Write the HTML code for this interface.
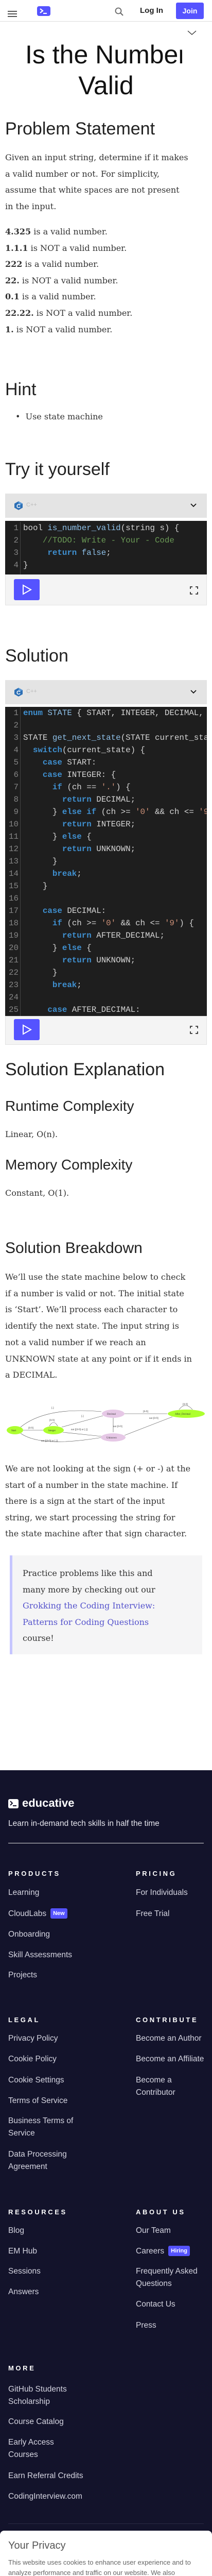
<!DOCTYPE html>
<html><head><meta charset="utf-8">
<style>
*{margin:0;padding:0;box-sizing:border-box}
html,body{width:412px;height:5156px;overflow:hidden;background:#fff}
body{font-family:"Liberation Sans",sans-serif;color:#222}
#w{position:relative;width:412px;height:5156px;overflow:hidden}
.a{position:absolute;white-space:nowrap}
.h{font-family:"Liberation Sans",sans-serif;font-size:34px;line-height:1;color:#222;left:10px}
.p{font-family:"DejaVu Serif",serif;font-size:16px;line-height:31.6px;color:#333;left:10px}
.code{position:absolute;left:10px;width:392px;background:#1e1e1e;overflow:hidden;font-family:"Liberation Mono",monospace;font-size:15.8px;line-height:24px;color:#d4d4d4}
.code .g{position:absolute;left:0;top:0;bottom:0;width:30px;border-right:1px solid #444;text-align:right;padding-right:3px;color:#858585;overflow:hidden}
.code .t{position:absolute;left:35px;top:0;white-space:pre}
.k{color:#3f8fcf;font-weight:bold}.f{color:#8ec0e8}.c{color:#6a9955}.s{color:#ce9178}
.ch{position:absolute;left:10px;width:392px;background:#e4e4e4}
.bar{position:absolute;left:10px;width:392px;background:#f4f4f4;border:1px solid #e2e2e2}
.run{position:absolute;left:27px;width:50px;height:41px;background:#5553ff;border-radius:3px}
.fh{position:absolute;font-size:13px;font-weight:bold;letter-spacing:3.6px;color:#fff;line-height:1}
.fl{position:absolute;font-size:15.5px;line-height:24px;color:#d4d4e0;white-space:nowrap}
.bd{display:inline-block;background:#5553ff;color:#fff;font-size:11px;font-weight:bold;padding:3px 5px;border-radius:3px;vertical-align:2px;margin-left:8px;line-height:14px}
</style></head><body><div id="w">

<div class="a" style="left:15px;top:21px;width:18px;height:2px;background:#555"></div>
<div class="a" style="left:15px;top:26px;width:18px;height:2px;background:#555"></div>
<div class="a" style="left:15px;top:31px;width:18px;height:2px;background:#555"></div>
<div class="a" style="left:72px;top:12px;width:26px;height:19px;background:#5553ff;border-radius:4px"></div>
<svg class="a" style="left:72px;top:12px" width="26" height="19"><path d="M6 5 L11 9 L6 13" stroke="#fff" stroke-width="2.2" fill="none"/><path d="M12 14 H19" stroke="#fff" stroke-width="2.2"/></svg>
<svg class="a" style="left:222px;top:13px" width="20" height="20"><circle cx="8" cy="8" r="5.5" stroke="#666" stroke-width="1.8" fill="none"/><path d="M12 12 L17 17" stroke="#666" stroke-width="2"/></svg>
<div class="a" style="left:272px;top:12px;font-size:15px;font-weight:bold;color:#222;line-height:18px">Log In</div>
<div class="a" style="left:342px;top:5px;width:54px;height:32px;background:#5553ff;border-radius:3px;color:#fff;font-size:14px;font-weight:bold;text-align:center;line-height:32px">Join</div>
<div class="a" style="left:0;top:41px;width:412px;height:1px;background:#ddd"></div>

<div class="a" style="left:0;top:76px;width:412px;text-align:center;font-size:50px;line-height:60px;color:#111">Is the Number<br>Valid</div>
<div class="a" style="left:354px;top:70px;width:58px;height:60px;background:#fff"></div>
<svg class="a" style="left:363px;top:58px" width="20" height="12"><path d="M2 2 L10 9 L18 2" stroke="#333" stroke-width="1.3" fill="none"/></svg>

<div class="a h" style="top:233px">Problem Statement</div>
<div class="a p" style="top:290px">Given an input string, determine if it makes<br>a valid number or not. For simplicity,<br>assume that white spaces are not present<br>in the input.</div>
<div class="a p" style="top:434px"><b>4.325</b> is a valid number.<br><b>1.1.1</b> is NOT a valid number.<br><b>222</b> is a valid number.<br><b>22.</b> is NOT a valid number.<br><b>0.1</b> is a valid number.<br><b>22.22.</b> is NOT a valid number.<br><b>1.</b> is NOT a valid number.</div>

<div class="a h" style="top:739px">Hint</div>
<div class="a p" style="top:793px;left:30px">•&nbsp;&nbsp;Use state machine</div>

<div class="a h" style="top:894px">Try it yourself</div>
<div class="ch" style="top:958px;height:47px"></div>
<svg class="a" style="left:27px;top:972px" width="18" height="19"><path d="M9 1 L17 5.5 L17 13.5 L9 18 L1 13.5 L1 5.5Z" fill="#2c6fb5"/><path d="M9 1 L17 5.5 L9 9.5Z" fill="#5b9ad8"/><text x="9" y="14" font-size="11" font-weight="bold" fill="#fff" text-anchor="middle" font-family="Liberation Sans">C</text></svg>
<div class="a" style="left:51px;top:974px;font-size:11px;color:#bbb">C++</div>
<svg class="a" style="left:369px;top:976px" width="14" height="10"><path d="M2 2 L7 7 L12 2" stroke="#111" stroke-width="1.8" fill="none"/></svg>
<div class="code" style="top:1011px;height:104px;padding-top:2px"><div class="g" style="top:2px">1<br>2<br>3<br>4</div><div class="t" style="top:2px">bool <span class="f">is_number_valid</span>(string s) {
    <span class="c">//TODO: Write - Your - Code</span>
     <span class="k">return</span> <span class="f">false</span>;
}</div></div>
<div class="bar" style="top:1115px;height:60px"></div>
<div class="run" style="top:1124px"><svg width="50" height="41"><path d="M18 12 L33 20.5 L18 29Z" stroke="#fff" stroke-width="2" fill="none"/></svg></div>
<svg class="a" style="left:369px;top:1138px" width="16" height="16"><path d="M1 5 V1 H5 M11 1 H15 V5 M15 11 V15 H11 M5 15 H1 V11" stroke="#333" stroke-width="1.8" fill="none"/></svg>

<div class="a h" style="top:1256px">Solution</div>
<div class="ch" style="top:1320px;height:47px"></div>
<svg class="a" style="left:27px;top:1334px" width="18" height="19"><path d="M9 1 L17 5.5 L17 13.5 L9 18 L1 13.5 L1 5.5Z" fill="#2c6fb5"/><path d="M9 1 L17 5.5 L9 9.5Z" fill="#5b9ad8"/><text x="9" y="14" font-size="11" font-weight="bold" fill="#fff" text-anchor="middle" font-family="Liberation Sans">C</text></svg>
<div class="a" style="left:51px;top:1336px;font-size:11px;color:#bbb">C++</div>
<svg class="a" style="left:369px;top:1338px" width="14" height="10"><path d="M2 2 L7 7 L12 2" stroke="#111" stroke-width="1.8" fill="none"/></svg>
<div class="code" style="top:1372px;height:600px"><div class="g">1<br>2<br>3<br>4<br>5<br>6<br>7<br>8<br>9<br>10<br>11<br>12<br>13<br>14<br>15<br>16<br>17<br>18<br>19<br>20<br>21<br>22<br>23<br>24<br>25</div><div class="t"><span class="k">enum</span> <span class="f">STATE</span> { START, INTEGER, DECIMAL, UNKNOWN, AFTER_DECIMAL};

STATE <span class="f">get_next_state</span>(STATE current_state, char ch) {
  <span class="k">switch</span>(current_state) {
    <span class="k">case</span> START:
    <span class="k">case</span> INTEGER: {
      <span class="k">if</span> (ch == <span class="s">'.'</span>) {
        <span class="k">return</span> DECIMAL;
      } <span class="k">else if</span> (ch &gt;= <span class="s">'0'</span> &amp;&amp; ch &lt;= <span class="s">'9'</span>) {
        <span class="k">return</span> INTEGER;
      } <span class="k">else</span> {
        <span class="k">return</span> UNKNOWN;
      }
      <span class="k">break</span>;
    }

    <span class="k">case</span> DECIMAL:
      <span class="k">if</span> (ch &gt;= <span class="s">'0'</span> &amp;&amp; ch &lt;= <span class="s">'9'</span>) {
        <span class="k">return</span> AFTER_DECIMAL;
      } <span class="k">else</span> {
        <span class="k">return</span> UNKNOWN;
      }
      <span class="k">break</span>;

     <span class="k">case</span> AFTER_DECIMAL:</div></div>
<div class="bar" style="top:1972px;height:56px"></div>
<div class="run" style="top:1978px"><svg width="50" height="41"><path d="M18 12 L33 20.5 L18 29Z" stroke="#fff" stroke-width="2" fill="none"/></svg></div>
<svg class="a" style="left:369px;top:1991px" width="16" height="16"><path d="M1 5 V1 H5 M11 1 H15 V5 M15 11 V15 H11 M5 15 H1 V11" stroke="#333" stroke-width="1.8" fill="none"/></svg>

<div class="a h" style="top:2059px">Solution Explanation</div>
<div class="a h" style="top:2133px;font-size:28px">Runtime Complexity</div>
<div class="a p" style="top:2186px">Linear, O(n).</div>
<div class="a h" style="top:2247px;font-size:28px">Memory Complexity</div>
<div class="a p" style="top:2300px">Constant, O(1).</div>
<div class="a h" style="top:2408px;font-size:30px">Solution Breakdown</div>
<div class="a p" style="top:2463px;line-height:31.7px">We’ll use the state machine below to check<br>if a number is valid or not. The initial state<br>is ‘Start’. We’ll process each character to<br>identify the next state. The input string is<br>not a valid number if we reach an<br>UNKNOWN state at any point or if it ends in<br>a DECIMAL.</div>

<svg class="a" style="left:0;top:2710px" width="412" height="100" font-family="Liberation Serif" font-size="5">
<g fill="none" stroke="#444" stroke-width="0.6">
<path d="M40 60 Q90 20 197 30"/><path d="M45 66 H84"/><path d="M120 60 L200 38"/><path d="M122 70 L198 78"/><path d="M40 72 Q80 100 198 80"/>
<path d="M220 41 V70"/><path d="M242 34 H325"/><path d="M335 40 L242 76"/>
<path d="M96 58 Q104 44 112 58"/><path d="M348 26 Q360 10 374 26"/>
</g>
<ellipse cx="29" cy="66" rx="16" ry="8" fill="#adff2f"/><ellipse cx="104" cy="66" rx="20" ry="8" fill="#adff2f"/>
<ellipse cx="220" cy="34" rx="22" ry="8" fill="#e6c8e6"/><ellipse cx="220" cy="80" rx="24" ry="8" fill="#e6c8e6"/>
<ellipse cx="362" cy="34" rx="36" ry="8" fill="#adff2f"/>
<g fill="#333"><text x="22" y="68">Start</text><text x="94" y="68">Integer</text><text x="208" y="36">Decimal</text><text x="207" y="82">Unknown</text><text x="340" y="36">After_Decimal</text>
<text x="100" y="24">[.]</text><text x="55" y="63">[0-9]</text><text x="96" y="48">[0-9]</text><text x="158" y="40">[.]</text><text x="138" y="66">not [[0-9] or [.]]</text><text x="80" y="88">not [[0-9] or [.]]</text><text x="220" y="60">not [0-9]</text><text x="278" y="31">[0-9]</text><text x="290" y="44">not [0-9]</text><text x="355" y="17">[0-9]</text></g>
</svg>

<div class="a p" style="top:2835px">We are not looking at the sign (+ or -) at the<br>start of a number in the state machine. If<br>there is a sign at the start of the input<br>string, we start processing the string for<br>the state machine after that sign character.</div>

<div class="a" style="left:19px;top:3019px;width:374px;height:192px;background:#f5f5f6;border-left:5px solid #c6c6ff"></div>
<div class="a p" style="left:44px;top:3038px">Practice problems like this and<br>many more by checking out our<br><span style="color:#5553cc">Grokking the Coding Interview:</span><br><span style="color:#5553cc">Patterns for Coding Questions</span><br>course!</div>

<div class="a" style="left:0;top:3436px;width:412px;height:1720px;background:#13132b"></div>
<div class="a" style="left:16px;top:3492px;width:20px;height:18px;background:#fff;border-radius:3px"></div>
<svg class="a" style="left:16px;top:3492px" width="20" height="18"><path d="M4 4 L8 8 L4 12" stroke="#13132b" stroke-width="2" fill="none"/><path d="M9 13 H16" stroke="#13132b" stroke-width="2"/></svg>
<div class="a" style="left:43px;top:3487px;font-size:22px;font-weight:bold;color:#fff;line-height:26px">educative</div>
<div class="a" style="left:16px;top:3530px;font-size:15.5px;color:#e6e6ee;line-height:20px">Learn in-demand tech skills in half the time</div>
<div class="a" style="left:16px;top:3577px;width:380px;height:1px;background:#ddd"></div>

<div class="fh" style="left:16px;top:3630px">PRODUCTS</div>
<div class="fh" style="left:264px;top:3630px">PRICING</div>
<div class="fl" style="left:16px;top:3662px">Learning</div>
<div class="fl" style="left:16px;top:3703px">CloudLabs<span class="bd">New</span></div>
<div class="fl" style="left:16px;top:3743px">Onboarding</div>
<div class="fl" style="left:16px;top:3783px">Skill Assessments</div>
<div class="fl" style="left:16px;top:3822px">Projects</div>
<div class="fl" style="left:264px;top:3662px">For Individuals</div>
<div class="fl" style="left:264px;top:3703px">Free Trial</div>

<div class="fh" style="left:16px;top:3914px">LEGAL</div>
<div class="fh" style="left:264px;top:3914px">CONTRIBUTE</div>
<div class="fl" style="left:16px;top:3945px">Privacy Policy</div>
<div class="fl" style="left:16px;top:3985px">Cookie Policy</div>
<div class="fl" style="left:16px;top:4026px">Cookie Settings</div>
<div class="fl" style="left:16px;top:4066px">Terms of Service</div>
<div class="fl" style="left:16px;top:4105px">Business Terms of<br>Service</div>
<div class="fl" style="left:16px;top:4170px">Data Processing<br>Agreement</div>
<div class="fl" style="left:264px;top:3945px">Become an Author</div>
<div class="fl" style="left:264px;top:3985px">Become an Affiliate</div>
<div class="fl" style="left:264px;top:4026px">Become a<br>Contributor</div>

<div class="fh" style="left:16px;top:4287px">RESOURCES</div>
<div class="fh" style="left:264px;top:4287px">ABOUT US</div>
<div class="fl" style="left:16px;top:4318px">Blog</div>
<div class="fl" style="left:16px;top:4358px">EM Hub</div>
<div class="fl" style="left:16px;top:4397px">Sessions</div>
<div class="fl" style="left:16px;top:4437px">Answers</div>
<div class="fl" style="left:264px;top:4318px">Our Team</div>
<div class="fl" style="left:264px;top:4358px">Careers<span class="bd">Hiring</span></div>
<div class="fl" style="left:264px;top:4397px">Frequently Asked<br>Questions</div>
<div class="fl" style="left:264px;top:4461px">Contact Us</div>
<div class="fl" style="left:264px;top:4502px">Press</div>

<div class="fh" style="left:16px;top:4590px">MORE</div>
<div class="fl" style="left:16px;top:4626px;line-height:23.5px">GitHub Students<br>Scholarship</div>
<div class="fl" style="left:16px;top:4689px">Course Catalog</div>
<div class="fl" style="left:16px;top:4729px;line-height:23.5px">Early Access<br>Courses</div>
<div class="fl" style="left:16px;top:4794px">Earn Referral Credits</div>
<div class="fl" style="left:16px;top:4834px">CodingInterview.com</div>
<div class="a" style="left:16px;top:4898px;width:380px;height:1px;background:#2a2a45"></div>

<div class="a" style="left:0;top:4912px;width:412px;height:243px;background:#fff;border-radius:8px 8px 0 0"></div>
<div class="a" style="left:16px;top:4931px;font-size:20px;color:#555;line-height:1">Your Privacy</div>
<div class="a" style="left:16px;top:4964px;font-size:13px;line-height:19.7px;color:#666">This website uses cookies to enhance user experience and to<br>analyze performance and traffic on our website. We also<br>share information about your use of our site with our social<br>media, advertising and analytics partners. <b style="color:#5553ff;text-decoration:underline">Cookie Policy</b></div>
<div class="a" style="left:16px;top:5060px;width:380px;height:45px;background:#5553ff;border-radius:4px;color:#fff;font-size:14px;font-weight:bold;text-align:center;line-height:45px">Accept Cookies</div>
<div class="a" style="left:0;top:5122px;width:412px;text-align:center;font-size:14px;font-weight:bold;color:#5553ff;text-decoration:underline;line-height:16px">Do Not Sell My Personal Information</div>
</div></body></html>
